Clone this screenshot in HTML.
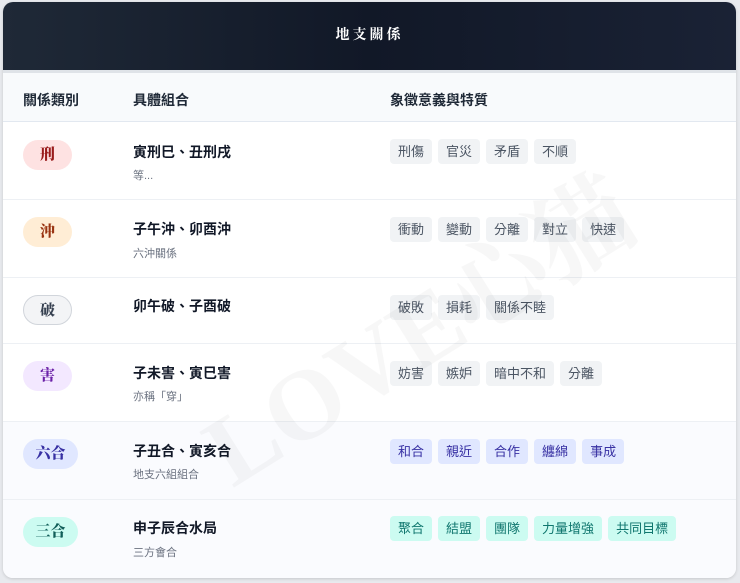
<!DOCTYPE html>
<html><head><meta charset="utf-8"><style>
*{margin:0;padding:0;box-sizing:border-box}
body{width:740px;height:583px;background:#e8eaee;font-family:"Liberation Sans","Noto Sans CJK TC",sans-serif;position:relative;overflow:hidden}
.card{position:absolute;left:3px;top:2px;width:733px;height:576px;background:#fff;border-radius:10px;overflow:hidden;box-shadow:0 1px 3px rgba(0,0,0,.15)}
.hd{height:71px;background:linear-gradient(90deg,#1f2937,#111827 50%,#1a2235);color:#fff;text-align:center;line-height:68px;font-family:"Liberation Serif","Noto Serif CJK SC",serif;font-weight:bold;font-size:14px;letter-spacing:3px;border-bottom:3px solid #dfe3e8}
.th{height:49px;background:#f8fafc;border-bottom:1px solid #e2e8f0;position:relative;font-weight:bold;font-size:14px;color:#1f2937}
.th span{position:absolute;top:17px}
.row{position:relative;border-bottom:1px solid #edf0f4}
.row.h{background:#fafbfe}
.b{position:absolute;left:20px;width:49px;height:30px;border-radius:15px;text-align:center;line-height:30px;font-family:"Liberation Serif","Noto Serif CJK SC",serif;font-weight:900;font-size:15px}
.t1{position:absolute;left:130px;font-size:14px;font-weight:600;color:#111827}
.t2{position:absolute;left:130px;font-size:11px;color:#6b7280}
.tags{position:absolute;left:387px;display:flex;gap:6px}
.tags span{height:25px;line-height:25px;padding:0 8px;border-radius:4px;background:#f1f3f5;color:#4b5563;font-size:13px}
.g1 span{background:#e0e7ff;color:#3730a3}
.g2 span{background:#ccfbf1;color:#0f766e}
.wm{position:absolute;left:170px;top:250px;font-family:"Liberation Serif","Noto Serif CJK SC",serif;font-size:100px;font-weight:bold;color:rgba(0,0,0,.03);transform:rotate(-32deg);white-space:nowrap}
</style></head><body>
<div class="card">
<div class="hd">地支關係</div>
<div class="th"><span style="left:20px">關係類別</span><span style="left:130px">具體組合</span><span style="left:387px">象徵意義與特質</span></div>

<div class="row" style="height:78px"><div class="b" style="top:18px;background:#fee2e2;color:#991b1b">刑</div><div class="t1" style="top:20px">寅刑巳、丑刑戌</div><div class="t2" style="top:45px">等...</div><div class="tags" style="top:17px"><span>刑傷</span><span>官災</span><span>矛盾</span><span>不順</span></div></div>

<div class="row" style="height:78px"><div class="b" style="top:17px;background:#ffedd5;color:#9a3412">沖</div><div class="t1" style="top:19px">子午沖、卯酉沖</div><div class="t2" style="top:45px">六沖關係</div><div class="tags" style="top:17px"><span>衝動</span><span>變動</span><span>分離</span><span>對立</span><span>快速</span></div></div>

<div class="row" style="height:66px"><div class="b" style="top:17px;background:#f3f4f6;color:#374151;border:1px solid #d1d5db">破</div><div class="t1" style="top:18px">卯午破、子酉破</div><div class="tags" style="top:17px"><span>破敗</span><span>損耗</span><span>關係不睦</span></div></div>

<div class="row" style="height:78px"><div class="b" style="top:17px;background:#f3e8ff;color:#6b21a8">害</div><div class="t1" style="top:19px">子未害、寅巳害</div><div class="t2" style="top:44px">亦稱「穿」</div><div class="tags" style="top:17px"><span>妨害</span><span>嫉妒</span><span>暗中不和</span><span>分離</span></div></div>

<div class="row h" style="height:78px"><div class="b" style="top:17px;width:55px;background:#e0e7ff;color:#3730a3">六合</div><div class="t1" style="top:19px">子丑合、寅亥合</div><div class="t2" style="top:44px">地支六組組合</div><div class="tags g1" style="top:17px"><span>和合</span><span>親近</span><span>合作</span><span>纏綿</span><span>事成</span></div></div>

<div class="row h" style="height:78px;border:none"><div class="b" style="top:17px;width:55px;background:#ccfbf1;color:#115e59">三合</div><div class="t1" style="top:18px">申子辰合水局</div><div class="t2" style="top:44px">三方會合</div><div class="tags g2" style="top:16px"><span>聚合</span><span>結盟</span><span>團隊</span><span>力量增強</span><span>共同目標</span></div></div>

<div class="wm">LOVE心猫</div>
</div>
</body></html>
